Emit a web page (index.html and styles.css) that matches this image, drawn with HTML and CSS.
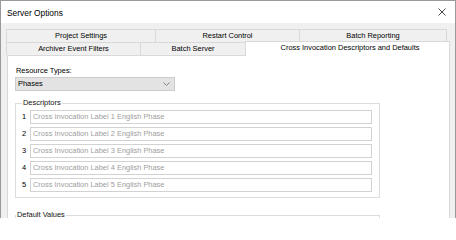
FILE: index.html
```html
<!DOCTYPE html>
<html>
<head>
<meta charset="utf-8">
<link rel="stylesheet" href="styles.css">
</head>
<body>
<div class="window">
  <div class="titlebar">
    <span class="title">Server Options</span>
    <svg class="close" width="8" height="8" viewBox="0 0 8 8"><path d="M0.5 0.5 L7.5 7.5 M7.5 0.5 L0.5 7.5" stroke="#333" stroke-width="0.9" fill="none"/></svg>
  </div>
  <div class="body">
    <div class="tabrow">
      <div class="tab t-proj">Project Settings</div>
      <div class="tab t-restart">Restart Control</div>
      <div class="tab t-report last">Batch Reporting</div>
    </div>
    <div class="tabrow">
      <div class="tab t-arch">Archiver Event Filters</div>
      <div class="tab t-batch">Batch Server</div>
      <div class="tab t-cross selected">Cross Invocation Descriptors and Defaults</div>
    </div>
    <div class="panel">
      <div class="lbl">Resource Types:</div>
      <div class="combo"><span>Phases</span>
        <svg class="chev" width="7" height="4" viewBox="0 0 7 4"><path d="M0.5 0.5 L3.5 3.5 L6.5 0.5" stroke="#6a6a6a" stroke-width="0.8" fill="none"/></svg>
      </div>
      <fieldset class="group">
        <legend>Descriptors</legend>
        <div class="rows">
          <div class="row"><span class="num">1</span><div class="field">Cross Invocation Label 1 English Phase</div></div>
          <div class="row"><span class="num">2</span><div class="field">Cross Invocation Label 2 English Phase</div></div>
          <div class="row"><span class="num">3</span><div class="field">Cross Invocation Label 3 English Phase</div></div>
          <div class="row"><span class="num">4</span><div class="field">Cross Invocation Label 4 English Phase</div></div>
          <div class="row"><span class="num">5</span><div class="field">Cross Invocation Label 5 English Phase</div></div>
        </div>
      </fieldset>
      <fieldset class="group defaults">
        <legend>Default Values</legend>
      </fieldset>
    </div>
  </div>
</div>
</body>
</html>
```
FILE: styles.css
```css
html, body {
  margin: 0;
  padding: 0;
  background: #ffffff;
}
body {
  font-family: "Liberation Sans", Arial, sans-serif;
  font-size: 7.45px;
  color: #000000;
}
.window {
  width: 456px;
  height: 218px;
  box-sizing: border-box;
  border: 1px solid #9a9a9a;
  border-bottom: none;
  overflow: hidden;
  background: #f0f0f0;
}
.titlebar {
  height: 22px;
  background: #ffffff;
  display: flex;
  align-items: center;
  justify-content: space-between;
  padding: 0 9px 0 6px;
}
.title {
  font-size: 8.4px;
  color: #000;
  padding-top: 1px;
}
.close {
  display: block;
}
.body {
  padding: 6px 0 0 5px;
}
.tabrow {
  display: flex;
  height: 13px;
}
.tab {
  box-sizing: border-box;
  height: 13px;
  border-top: 1px solid #d9d9d9;
  border-left: 1px solid #d9d9d9;
  background: #f0f0f0;
  line-height: 12px;
  text-align: center;
  white-space: nowrap;
  color: #000;
}
.tab.last {
  border-right: 1px solid #d9d9d9;
}
.t-proj { width: 149px; }
.t-restart { width: 144px; }
.t-report { width: 148px; }
.t-arch { width: 134px; }
.t-batch { width: 105px; }
.t-cross { width: 205px; }
.tab.selected {
  position: relative;
  z-index: 1;
  height: 15px;
  margin-top: -1px;
  margin-bottom: -1px;
  background: #ffffff;
  border-right: 1px solid #d9d9d9;
  line-height: 12px;
  padding-left: 5px;
}
.panel {
  margin-left: 1px;
  width: 443px;
  height: 170px;
  box-sizing: border-box;
  background: #ffffff;
  border: 1px solid #d9d9d9;
  border-bottom: none;
  padding-top: 10px;
}
.lbl {
  line-height: 10px;
  margin-left: 8px;
}
.combo {
  box-sizing: border-box;
  margin: 1px 0 0 7px;
  width: 160px;
  height: 14px;
  background: #e3e3e3;
  border: 1px solid #cccccc;
  display: flex;
  align-items: center;
  justify-content: space-between;
  padding: 0 4px 0 2px;
  line-height: 12px;
}
.chev {
  display: block;
}
.group {
  box-sizing: border-box;
  margin: 7px 0 0 7px;
  width: 365px;
  border: 1px solid #dcdcdc;
  padding: 2px 7px 5px 6px;
  min-width: 0;
}
.group legend {
  padding: 0 1px;
  line-height: 10px;
  color: #111;
}
.rows {
  display: flex;
  flex-direction: column;
  gap: 3px;
}
.row {
  display: flex;
  align-items: center;
}
.num {
  width: 8px;
  line-height: 14px;
  color: #000;
}
.field {
  box-sizing: border-box;
  width: 342px;
  height: 14px;
  border: 1px solid #d2d2d2;
  background: #ffffff;
  color: #9e9e9e;
  line-height: 12px;
  padding-left: 2px;
  white-space: nowrap;
}
.defaults {
  margin-top: 12px;
  height: 40px;
  padding: 0;
}
```
